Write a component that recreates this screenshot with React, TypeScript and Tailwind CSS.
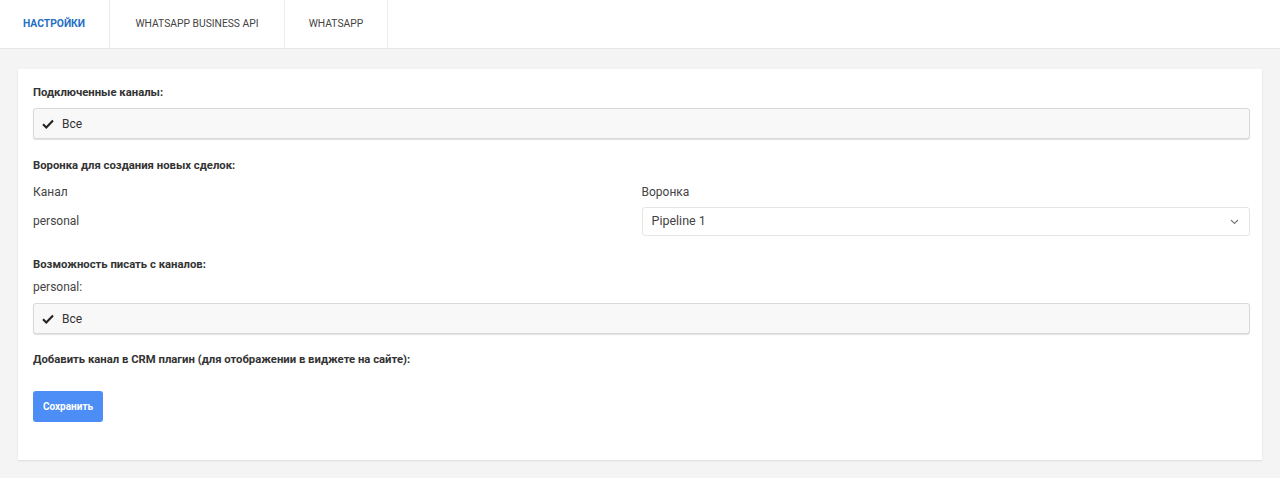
import React from "react";

const font = { fontFamily: "Roboto, 'Noto Sans', sans-serif" };

function Check() {
  return (
    <svg width="12" height="10" viewBox="0 0 12 10" className="shrink-0">
      <path d="M1 5.2 L4.3 8.4 L11 1.4" fill="none" stroke="#222" strokeWidth="2.1" />
    </svg>
  );
}

function MultiBox() {
  return (
    <div className="h-[31px] rounded-[3px] border border-[#d9d9d9] bg-[#f8f8f8] shadow-[0_1px_1px_rgba(0,0,0,0.12)] flex items-center pl-[8px] gap-[8px]">
      <Check />
      <span className="text-[12px] text-[#333]">Все</span>
    </div>
  );
}

export default function App() {
  return (
    <div className="w-[1280px] h-[478px] bg-[#f4f4f4] text-[#333]" style={font}>
      <div className="h-[49px] bg-white border-b border-[#e6e6e6] flex">
        <div className="w-[110px] flex items-center pl-[23px] border-r border-[#ececec] text-[10.3px] font-bold text-[#1f6fc2]">НАСТРОЙКИ</div>
        <div className="w-[175px] flex items-center justify-center border-r border-[#ececec] text-[10.3px] text-[#444]">WHATSAPP BUSINESS API</div>
        <div className="w-[103px] flex items-center justify-center border-r border-[#ececec] text-[10.3px] text-[#444]">WHATSAPP</div>
      </div>
      <div className="px-[18px] pt-[20px]">
        <div className="bg-white h-[391px] shadow-[0_1px_2px_rgba(0,0,0,0.1)] pl-[15px] pr-[12px] pt-[16px]">
          <div className="text-[11.3px] font-bold text-[#333] h-[16px] leading-[16px]">Подключенные каналы:</div>
          <div className="mt-[7px]"><MultiBox /></div>
          <div className="mt-[19px] text-[11.3px] font-bold leading-[16px]">Воронка для создания новых сделок:</div>
          <div className="mt-[10px] grid grid-cols-2">
            <div>
              <div className="text-[12px] leading-[16px] text-[#444]">Канал</div>
              <div className="h-[28px] mt-[7px] flex items-center text-[12px] text-[#444]">personal</div>
            </div>
            <div>
              <div className="text-[12px] leading-[16px] text-[#444]">Воронка</div>
              <div className="mt-[7px] h-[29px] border border-[#e5e5e5] rounded-[3px] flex items-center justify-between pl-[9px] pr-[10px]">
                <span className="text-[12.5px] text-[#444]">Pipeline 1</span>
                <svg width="9" height="6" viewBox="0 0 9 6"><path d="M1 1 L4.5 4.5 L8 1" fill="none" stroke="#777" strokeWidth="1.1" /></svg>
              </div>
            </div>
          </div>
          <div className="mt-[21px] text-[11.3px] font-bold leading-[16px]">Возможность писать с каналов:</div>
          <div className="mt-[6px] text-[12px] leading-[16px] text-[#444]">personal:</div>
          <div className="mt-[8px]"><MultiBox /></div>
          <div className="mt-[18px] text-[11.3px] font-bold leading-[16px]">Добавить канал в CRM плагин (для отображении в виджете на сайте):</div>
          <button className="mt-[23px] h-[31px] w-[70px] rounded-[3px] bg-[#4c8df6] text-white text-[10px] font-bold">Сохранить</button>
        </div>
      </div>
    </div>
  );
}
